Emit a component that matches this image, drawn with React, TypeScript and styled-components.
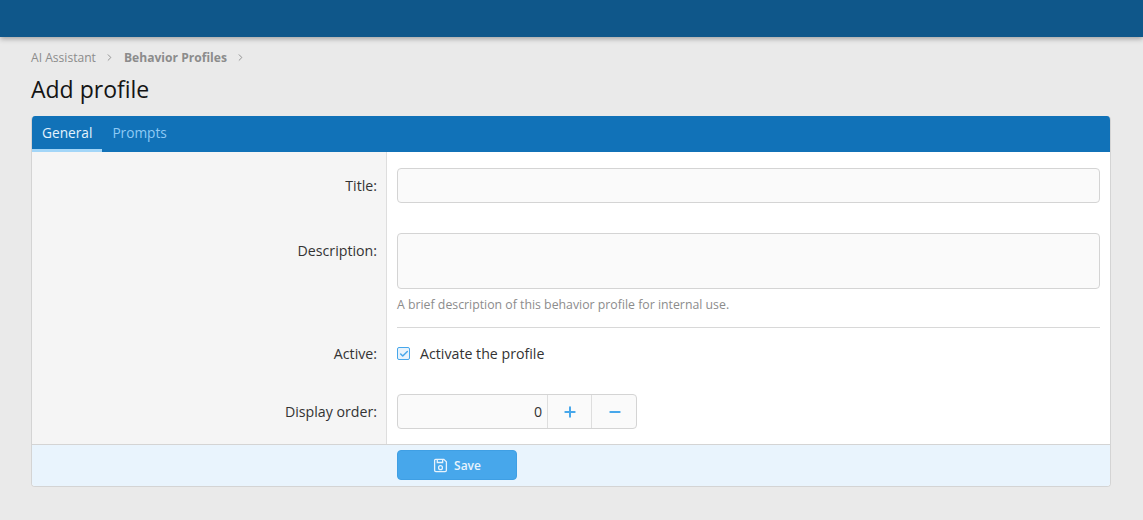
import styled, { createGlobalStyle } from "styled-components";
import { LuChevronRight, LuCheck, LuPlus, LuMinus } from "react-icons/lu";

const GlobalStyle = createGlobalStyle`
  html, body {
    margin: 0;
    padding: 0;
    background: #eaeaea;
    font-family: "Open Sans", "Noto Sans", sans-serif;
    overflow: hidden;
  }
  * {
    box-sizing: border-box;
  }
`;

const SaveIcon = () => (
  <svg width="15" height="15" viewBox="0 0 14 14" fill="none" stroke="currentColor" strokeWidth="1.2">
    <path d="M1.5 2.2a1 1 0 0 1 1-1h7.6l2.4 2.4v7.9a1.2 1.2 0 0 1-1.2 1.2H2.7a1.2 1.2 0 0 1-1.2-1.2z" />
    <path d="M4 1.2v3h5v-3" />
    <circle cx="7" cy="9" r="1.8" />
  </svg>
);

const App = () => {
  return (
    <Page>
      <GlobalStyle />
      <TopBar />
      <Content>
        <Breadcrumbs>
          <Crumb>AI Assistant</Crumb>
          <Chevron>
            <LuChevronRight />
          </Chevron>
          <Crumb $bold>Behavior Profiles</Crumb>
          <Chevron>
            <LuChevronRight />
          </Chevron>
        </Breadcrumbs>
        <Title>Add profile</Title>
        <Block>
          <Tabs>
            <Tab $active>General</Tab>
            <Tab>Prompts</Tab>
          </Tabs>
          <Row $top={16} $bottom={30}>
            <Label>
              <LabelText $top={8}>Title:</LabelText>
            </Label>
            <Value>
              <Input />
            </Value>
          </Row>
          <Row $bottom={0}>
            <Label>
              <LabelText $top={8}>Description:</LabelText>
            </Label>
            <Value>
              <TextArea />
              <Hint>A brief description of this behavior profile for internal use.</Hint>
              <Divider />
            </Value>
          </Row>
          <Row $top={16} $bottom={31}>
            <Label>
              <LabelText $top={0}>Active:</LabelText>
            </Label>
            <Value>
              <CheckRow>
                <CheckBox>
                  <LuCheck strokeWidth={3.5} />
                </CheckBox>
                Activate the profile
              </CheckRow>
            </Value>
          </Row>
          <Row $bottom={15}>
            <Label>
              <LabelText $top={8}>Display order:</LabelText>
            </Label>
            <Value>
              <Spinner>
                <SpinnerValue>0</SpinnerValue>
                <SpinnerButton>
                  <LuPlus strokeWidth={3} />
                </SpinnerButton>
                <SpinnerButton $last>
                  <LuMinus strokeWidth={3} />
                </SpinnerButton>
              </Spinner>
            </Value>
          </Row>
          <Footer>
            <SaveButton>
              <SaveIcon />
              Save
            </SaveButton>
          </Footer>
        </Block>
      </Content>
    </Page>
  );
};

export default App;

const Page = styled.div`
  width: 1143px;
  height: 520px;
  background: #eaeaea;
`;
const TopBar = styled.div`
  height: 37px;
  background: #0f578a;
  box-shadow: 0 2px 5px rgba(0, 0, 0, 0.3);
`;
const Content = styled.div`
  padding: 12px 32px 0 31px;
`;
const Breadcrumbs = styled.div`
  display: flex;
  align-items: center;
  height: 16px;
  font-size: 12.1px;
  color: #8c8c8c;
`;
const Crumb = styled.span<{ $bold?: boolean }>`
  font-weight: ${({ $bold }) => ($bold ? 700 : 400)};
`;
const Chevron = styled.span`
  display: flex;
  width: 28px;
  justify-content: center;
  font-size: 11px;
  color: #8c8c8c;
`;
const Title = styled.h1`
  margin: 8px 0 11px;
  height: 32px;
  font-size: 23px;
  line-height: 32px;
  font-weight: 400;
  color: #141414;
`;
const Block = styled.div`
  width: 1080px;
  background: #fff;
  border: 1px solid #d4d4d4;
  border-top: none;
  border-radius: 4px;
  overflow: hidden;
`;
const Tabs = styled.div`
  display: flex;
  height: 36px;
  background: #1172b8;
`;
const Tab = styled.div<{ $active?: boolean }>`
  padding: 0 10px;
  line-height: 33px;
  font-size: 13.7px;
  color: ${({ $active }) => ($active ? "#e4f2fd" : "#8fcaf5")};
  border-bottom: 3px solid ${({ $active }) => ($active ? "#a3d6f8" : "transparent")};
`;
const Row = styled.div<{ $top?: number; $bottom?: number }>`
  display: grid;
  grid-template-columns: 355px 1fr;
  font-size: 14.2px;
  color: #141414;
  & > div {
    padding-top: ${({ $top }) => $top ?? 0}px;
    padding-bottom: ${({ $bottom }) => $bottom ?? 0}px;
  }
`;
const Label = styled.div`
  background: #f5f5f5;
  border-right: 1px solid #dedede;
  padding-right: 9px;
  text-align: right;
`;
const LabelText = styled.div<{ $top: number }>`
  margin-top: ${({ $top }) => $top}px;
  line-height: 19px;
  color: #333;
`;
const Value = styled.div`
  padding-left: 10px;
  padding-right: 10px;
`;
const Input = styled.div`
  height: 35px;
  background: #fafafa;
  border: 1px solid #d4d4d4;
  border-radius: 4px;
`;
const TextArea = styled(Input)`
  height: 56px;
`;
const Hint = styled.div`
  margin-top: 7px;
  font-size: 12.3px;
  line-height: 18px;
  color: #8c8c8c;
`;
const Divider = styled.div`
  height: 1px;
  margin-top: 13px;
  background: #d8d8d8;
`;
const CheckRow = styled.div`
  display: flex;
  align-items: center;
  gap: 10px;
  height: 19px;
  color: #333;
`;
const CheckBox = styled.span`
  display: flex;
  align-items: center;
  justify-content: center;
  width: 13px;
  height: 13px;
  background: #e8f3fc;
  border: 1.5px solid #47a7eb;
  border-radius: 2px;
  color: #47a7eb;
  font-size: 10px;
`;
const Spinner = styled.div`
  display: flex;
  width: 240px;
  height: 35px;
  background: #fafafa;
  border: 1px solid #d4d4d4;
  border-radius: 4px;
`;
const SpinnerValue = styled.div`
  flex: 1;
  padding-right: 5px;
  line-height: 33px;
  text-align: right;
  color: #333;
`;
const SpinnerButton = styled.div<{ $last?: boolean }>`
  display: flex;
  align-items: center;
  justify-content: center;
  width: ${({ $last }) => ($last ? 45 : 44)}px;
  padding-left: ${({ $last }) => ($last ? 2 : 0)}px;
  border-left: 1px solid #dedede;
  color: #47a7eb;
  font-size: 16px;
`;
const Footer = styled.div`
  height: 42px;
  padding: 5px 0 0 365px;
  background: #e9f4fd;
  border-top: 1px solid #d4d4d4;
`;
const SaveButton = styled.div`
  display: flex;
  align-items: center;
  justify-content: center;
  gap: 6px;
  width: 120px;
  height: 30px;
  background: #47a7eb;
  border: 1px solid #3f9fe4;
  border-radius: 4px;
  color: #e8f3fc;
  font-size: 12px;
  font-weight: 600;
`;
